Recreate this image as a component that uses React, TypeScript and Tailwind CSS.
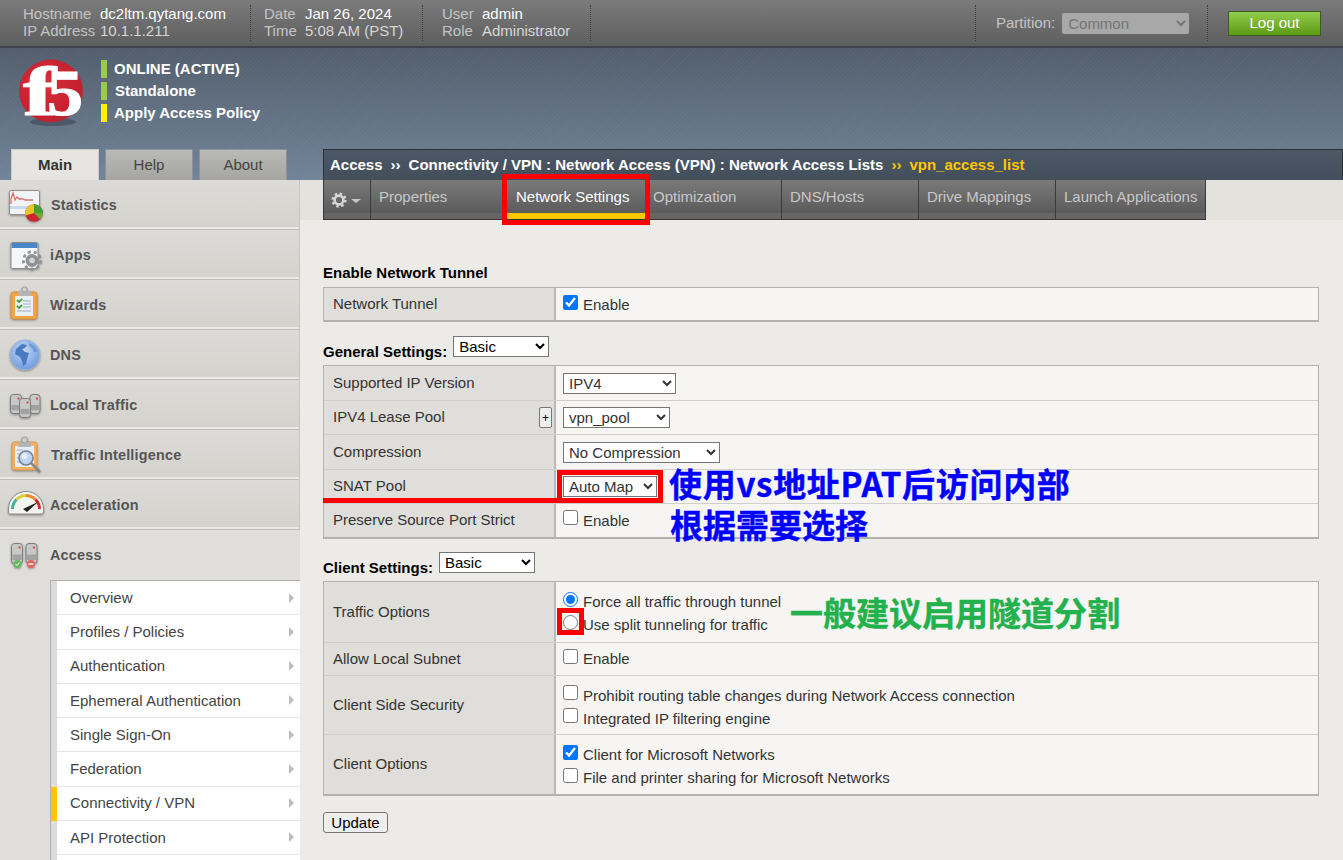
import type { ReactNode } from 'react';

const sans = "font-['Liberation_Sans',Arial,sans-serif]";
const iconCls = 'block shrink-0 drop-shadow-[0_1px_1px_rgba(0,0,0,0.35)]';

// sidebar icons share one 44x50 box, same size as the row they sit in
function StatsIcon() {
  return (
    <svg className={iconCls} width="44" height="50" viewBox="0 0 44 50">
      <rect x="9.5" y="10.5" width="30" height="24" rx="1.5" fill="#f3f4f6" stroke="#8f8f8f" />
      <rect x="10" y="26" width="29" height="3" fill="#c7daee" />
      <path d="M11 24V19l2-6 2 7 2-3 2 2h4l2 1h8" fill="none" stroke="#d8706c" strokeWidth="1.3" />
      <circle cx="34" cy="33" r="8.8" fill="#cc2630" />
      <path d="M34 33V24.2a8.8 8.8 0 0 1 8.8 8.8z" fill="#41a136" />
      <path d="M34 33l-8.4 2.5A8.8 8.8 0 0 1 34 24.2z" fill="#e8c42a" />
      <path d="M34 33h8.8a8.8 8.8 0 0 1-2.6 6.2z" fill="#6aae35" />
    </svg>
  );
}

function AppsIcon() {
  return (
    <svg className={iconCls} width="44" height="50" viewBox="0 0 44 50">
      <rect x="11" y="12.5" width="27" height="26" rx="1.5" fill="#f5f6f8" stroke="#8c8c8c" />
      <rect x="11.5" y="13" width="26" height="5" fill="#4a86c8" />
      <circle cx="32" cy="30.5" r="6.5" fill="#8d9297" />
      <circle cx="32" cy="30.5" r="8.6" fill="none" stroke="#8d9297" strokeWidth="2.8" strokeDasharray="3 3" />
      <circle cx="32" cy="30.5" r="2.8" fill="#d2d4d6" />
    </svg>
  );
}

function WizardIcon() {
  return (
    <svg className={iconCls} width="44" height="50" viewBox="0 0 44 50">
      <rect x="11" y="12" width="26" height="27" rx="2.5" fill="#f2a548" stroke="#d98c2e" />
      <rect x="15" y="16" width="18" height="20" fill="#e8eff7" />
      <rect x="18" y="11" width="13" height="5" rx="1.5" fill="#b5b5b5" />
      <circle cx="24.5" cy="9.5" r="2.6" fill="#cfcfcf" stroke="#9a9a9a" />
      <path d="M17 20l2 2 3-3M17 26l2 2 3-3" fill="none" stroke="#3fa535" strokeWidth="1.8" />
      <path d="M23 21h8M23 24h8M23 27h8M17 31h14" stroke="#a2aebd" strokeWidth="1.1" />
    </svg>
  );
}

function GlobeIcon() {
  return (
    <svg className={iconCls} width="44" height="50" viewBox="0 0 44 50">
      <defs>
        <radialGradient id="globe" cx="0.45" cy="0.35" r="0.75">
          <stop offset="0" stopColor="#c6daf6" />
          <stop offset="1" stopColor="#5f90dc" />
        </radialGradient>
      </defs>
      <circle cx="25" cy="25" r="15" fill="url(#globe)" stroke="#a0b6d8" />
      <path d="M16 19l6-5 5 1-2 3-3 1 3 3 4 1-2 6-1 5-3 2-1-5-2-4-5-3z" fill="#4a7ac2" />
      <path d="M29 13l6 3 3 6-4 0-2-4-3-2z" fill="#6f9bd8" />
    </svg>
  );
}

function Server({ x, y, w, h }: { x: number; y: number; w: number; h: number }) {
  return (
    <g>
      <rect x={x} y={y} width={w} height={h} rx="3" fill="#c8c8c8" stroke="#7a7a7a" />
      <rect x={x + 1} y={y + h * 0.55} width={w - 2} height={h * 0.28} fill="#a2a2a2" />
      <rect x={x + w - 4} y={y + 3} width="2" height="2" fill="#e0403a" />
    </g>
  );
}

function LocalIcon() {
  return (
    <svg className={iconCls} width="44" height="50" viewBox="0 0 44 50">
      <Server x={10.5} y={14.5} w={11} h={19} />
      <Server x={30} y={14.5} w={10} h={19} />
      <Server x={19.5} y={18.5} w={11} h={19} />
    </svg>
  );
}

function IntelIcon() {
  return (
    <svg className={iconCls} width="44" height="50" viewBox="0 0 44 50">
      <rect x="12" y="12" width="25" height="28" rx="2.5" fill="#f2b066" stroke="#dd9a48" />
      <rect x="15" y="16" width="19" height="21" fill="#e6edf6" />
      <rect x="18" y="12" width="13" height="5" rx="1.5" fill="#b5b5b5" />
      <circle cx="24.5" cy="10" r="3" fill="#cfcfcf" stroke="#9a9a9a" />
      <path d="M17 20h6M17 24h3M17 28h3M17 32h8" stroke="#a2aebd" strokeWidth="1.1" />
      <path d="M31 33l9 9" stroke="#8a8a8a" strokeWidth="2.6" />
      <circle cx="26" cy="28" r="7" fill="#bdd4ef" stroke="#6f8296" strokeWidth="1.6" />
      <circle cx="24.5" cy="26" r="3" fill="#e8f0fa" />
    </svg>
  );
}

function GaugeIcon() {
  return (
    <svg className={iconCls} width="44" height="50" viewBox="0 0 44 50">
      <path d="M8.500 29a17.500 17.500 0 0 1 35 0v3a2 2 0 0 1-2 2h-31a2 2 0 0 1-2-2z" fill="#f4f4f1" stroke="#8c8c8c" />
      <path d="M12.500 29a13.500 13.500 0 0 1 4-9.500" fill="none" stroke="#3fb59a" strokeWidth="3" />
      <path d="M16.500 19.500a13.500 13.500 0 0 1 9.500-4" fill="none" stroke="#d9cf3a" strokeWidth="3" />
      <path d="M26 15.500a13.500 13.500 0 0 1 9.500 4" fill="none" stroke="#ee8a2a" strokeWidth="3" />
      <path d="M35.500 19.500a13.500 13.500 0 0 1 4 9.500" fill="none" stroke="#d9262c" strokeWidth="3" />
      <path d="M23 29l15-7-11 10z" fill="#1f1f1f" />
    </svg>
  );
}

function AccessIcon() {
  return (
    <svg className={iconCls} width="44" height="50" viewBox="0 0 44 50">
      <Server x={11.5} y={13.5} w={11} h={20} />
      <Server x={26} y={13.5} w={11} h={20} />
      <circle cx="17.500" cy="34" r="4" fill="#62bb5c" />
      <path d="M15.500 34l1.500 1.500 2.500-3" fill="none" stroke="#fff" strokeWidth="1" />
      <circle cx="31" cy="34" r="4" fill="#e4645f" />
      <path d="M28.500 34h5" stroke="#fff" strokeWidth="1.400" />
    </svg>
  );
}

function GearIcon() {
  return (
    <svg width="16" height="16" viewBox="0 0 16 16">
      <circle cx="8" cy="8" r="4.400" fill="none" stroke="#d4d4d4" strokeWidth="2.600" />
      <circle cx="8" cy="8" r="6.400" fill="none" stroke="#d4d4d4" strokeWidth="2.400" strokeDasharray="2.500 2.500" />
    </svg>
  );
}

function F5Logo() {
  return (
    <svg className="block -mt-[14px]" width="70" height="88" viewBox="0 -14 70 88">
      <defs>
        <radialGradient id="f5red" cx="0.4" cy="0.4" r="0.7">
          <stop offset="0" stopColor="#d9303c" />
          <stop offset="0.75" stopColor="#c4202e" />
          <stop offset="1" stopColor="#a8323c" />
        </radialGradient>
      </defs>
      <ellipse cx="36" cy="63" rx="23" ry="4" fill="#39424e" opacity="0.55" />
      <ellipse cx="34" cy="32" rx="32" ry="31.500" fill="url(#f5red)" />
      <text x="6" y="56" textLength="33" lengthAdjust="spacingAndGlyphs" fontFamily="Liberation Serif, serif" fontWeight="700" fontSize="70" fill="#fff" stroke="#fff" strokeWidth="1.2">f</text>
      <text x="30" y="56" textLength="36" lengthAdjust="spacingAndGlyphs" fontFamily="Liberation Serif, serif" fontWeight="700" fontSize="66" fill="#fff" stroke="#fff" strokeWidth="1.2">5</text>
    </svg>
  );
}

const navItems = [
  { label: 'Statistics', icon: <StatsIcon />, text: 'ml-[7px]' },
  { label: 'iApps', icon: <AppsIcon />, text: 'ml-[6px]' },
  { label: 'Wizards', icon: <WizardIcon />, text: 'ml-[6px]' },
  { label: 'DNS', icon: <GlobeIcon />, text: 'ml-[6px]' },
  { label: 'Local Traffic', icon: <LocalIcon />, text: 'ml-[6px]' },
  { label: 'Traffic Intelligence', icon: <IntelIcon />, text: 'ml-[7px]' },
  { label: 'Acceleration', icon: <GaugeIcon />, text: 'ml-[6px]' },
];

const subItems = [
  'Overview',
  'Profiles / Policies',
  'Authentication',
  'Ephemeral Authentication',
  'Single Sign-On',
  'Federation',
  'Connectivity / VPN',
  'API Protection',
  '',
];

const tabs = [
  { label: 'Properties', w: 'w-[135px] pl-[8px]' },
  { label: 'Network Settings', w: 'w-[141px] pl-[10px]', active: true },
  { label: 'Optimization', w: 'w-[135px] pl-[6px]' },
  { label: 'DNS/Hosts', w: 'w-[137px] pl-[8px]' },
  { label: 'Drive Mappings', w: 'w-[137px] pl-[8px]' },
  { label: 'Launch Applications', w: 'w-[150px] pl-[8px]' },
];

function Info({ rows, labelW, className }: { rows: string[][]; labelW: string; className: string }) {
  return (
    <div className={`h-[36px] mt-[5px] pb-[2px] flex flex-col justify-center border-r border-dotted border-[#3d3d3d] ${className}`}>
      {rows.map((r, i) => (
        <div key={r[0]} className="flex leading-[17px]">
          <span className={`${labelW} text-[#c4c4c4]`}>{r[0]}</span>
          <span className={i === 0 ? 'text-white' : 'text-[#d6d6d6]'}>{r[1]}</span>
        </div>
      ))}
    </div>
  );
}

function Status({ color, text, pad }: { color: string; text: string; pad: string }) {
  return (
    <div className="flex items-center h-[18px]">
      <span className={`w-[6px] h-[18px] ${color}`} />
      <span className={`${pad} pt-[1px] font-bold text-white text-[15px]`}>{text}</span>
    </div>
  );
}

function Row({ label, h, top, extra, pad = '', children }: { label: string; h: string; top?: boolean; extra?: ReactNode; pad?: string; children: ReactNode }) {
  return (
    <div className={`flex ${h} ${top ? '' : 'border-t border-[#cfcfcb]'}`}>
      <div className="w-[232px] shrink-0 bg-[#dfdeda] border-r-2 border-[#b9b9b9] pl-[9px] pr-[2px] flex items-center justify-between">
        <span>{label}</span>
        {extra}
      </div>
      <div className={`flex-1 bg-[#f6f5f3] pl-[7px] flex flex-col justify-center ${pad}`}>{children}</div>
    </div>
  );
}

function Check({ label, checked }: { label: string; checked?: boolean }) {
  return (
    <label className="flex items-center h-[23px]">
      <input type="checkbox" defaultChecked={checked} className="w-[15px] h-[15px] accent-[#0075ff] -mt-[6px]" />
      <span className="ml-[5px] pt-[1px]">{label}</span>
    </label>
  );
}

function Radio({ label, checked }: { label: string; checked?: boolean }) {
  return (
    <label className="flex items-center h-[23px]">
      <input type="radio" name="traffic" defaultChecked={checked} className="w-[15px] h-[15px] accent-[#0075ff] -mt-[6px]" />
      <span className="ml-[5px] pt-[1px]">{label}</span>
    </label>
  );
}

function Select({ value, w }: { value: string; w: string }) {
  return (
    <select defaultValue={value} className={`${w} h-[21px] bg-white border border-[#767676] text-[15px] pl-[1px]`}>
      <option>{value}</option>
    </select>
  );
}

function Table({ children }: { children: ReactNode }) {
  return <div className="border-[1px] border-b-2 border-[#b2b2b0]">{children}</div>;
}

export default function App() {
  return (
    <div className={`${sans} relative w-[1343px] h-[860px] overflow-hidden bg-[#ecebe8] text-[15px] text-[#333]`}>
      {/* top bar */}
      <div className="h-[48px] flex bg-gradient-to-b from-[#7b7b7b] to-[#5e5e5e] border-b-2 border-[#3f4246]">
        <Info
          className="w-[251px] pl-[23px]"
          labelW="w-[77px]"
          rows={[['Hostname', 'dc2ltm.qytang.com'], ['IP Address', '10.1.1.211']]}
        />
        <Info
          className="w-[172px] pl-[13px]"
          labelW="w-[41px]"
          rows={[['Date', 'Jan 26, 2024'], ['Time', '5:08 AM (PST)']]}
        />
        <Info
          className="w-[168px] pl-[19px]"
          labelW="w-[40px]"
          rows={[['User', 'admin'], ['Role', 'Administrator']]}
        />
        <div className="ml-auto flex">
          <div className="w-[233px] h-[36px] mt-[5px] flex items-center pl-[20px] gap-[7px] border-x border-dotted border-[#3d3d3d] text-[#c4c4c4]">
            <span>Partition:</span>
            <select disabled defaultValue="Common" className="w-[127px] h-[21px] bg-[#a8a8a8] text-[#757575] pl-[2px] opacity-100 rounded-[2px]">
              <option>Common</option>
            </select>
          </div>
          <div className="w-[135px] pl-[20px] pt-[11px]">
            <div className="w-[93px] h-[25px] pb-[1px] flex items-center justify-center text-white bg-gradient-to-b from-[#93cd4c] to-[#5c9a0e] border border-[#3f5a22]">
              Log out
            </div>
          </div>
        </div>
      </div>

      {/* banner */}
      <div className="h-[132px] flex flex-col bg-[repeating-linear-gradient(135deg,rgba(255,255,255,0.025)_0,rgba(255,255,255,0.025)_1px,transparent_1px,transparent_3px),linear-gradient(to_bottom,#525e6d,#728499)]">
        <div className="h-[101px] flex pl-[17px] pt-[11px]">
          <F5Logo />
          <div className="ml-[14px] flex flex-col gap-[4px] pt-[1px]">
            <Status color="bg-[#9acb4c]" text="ONLINE (ACTIVE)" pad="ml-[7px]" />
            <Status color="bg-[#9acb4c]" text="Standalone" pad="ml-[8px]" />
            <Status color="bg-[#fff200]" text="Apply Access Policy" pad="ml-[7px]" />
          </div>
        </div>
        <div className="h-[31px] flex items-end pl-[11px]">
          <div className="w-[88px] h-[31px] pt-[1px] flex items-center justify-center font-bold bg-[#e6e5e1] border border-b-0 border-[#c9c9c5] text-[#333]">Main</div>
          <div className="w-[88px] h-[31px] pt-[1px] ml-[6px] flex items-center justify-center bg-gradient-to-b from-[#b9b9b5] to-[#a5a5a1] border border-b-0 border-[#8c9298] text-[#444]">Help</div>
          <div className="w-[88px] h-[31px] pt-[1px] ml-[6px] flex items-center justify-center bg-gradient-to-b from-[#b9b9b5] to-[#a5a5a1] border border-b-0 border-[#8c9298] text-[#444]">About</div>
          <div className="ml-[36px] flex-1 h-[31px] pt-[1px] flex items-center pl-[6px] font-bold text-white bg-gradient-to-b from-[#4c5866] to-[#434e5b] border border-b-0 border-[#2e3236]">
            <span>Access</span>
            <span className="mx-[8px]">››</span>
            <span>Connectivity / VPN : Network Access (VPN) : Network Access Lists</span>
            <span className="mx-[8px] text-[#ffc600]">››</span>
            <span className="text-[#ffc600]">vpn_access_list</span>
          </div>
        </div>
      </div>

      <div className="flex">
        {/* sidebar */}
        <div className="w-[300px] h-[680px] shrink-0 bg-[#dfdeda]">
          {navItems.map((n) => (
            <div key={n.label} className="h-[50px] flex items-center bg-gradient-to-b from-[#dcdbd7] to-[#d3d2cd] border-b border-[#bdbdba] border-r border-r-[#c6c6c3] shadow-[inset_0_-2px_0_#e9e8e5]">
              {n.icon}
              <span className={`${n.text} pt-[2px] font-bold text-[#555] text-[14.4px] tracking-[0.2px]`}>{n.label}</span>
            </div>
          ))}
          <div className="h-[50px] flex items-center">
            <AccessIcon />
            <span className="ml-[6px] pt-[2px] text-[14.4px] font-bold text-[#555] tracking-[0.2px]">Access</span>
          </div>
          <div className="ml-[50px] border-l border-t border-[#b0b0ae]">
            {subItems.map((s) => (
              <div key={s || 'more'} className="flex h-[34.25px]">
                <span className={`w-[6px] shrink-0 ${s.startsWith('Connectivity') ? 'bg-[#ffc600]' : 'bg-[#dcdcdc]'}`} />
                <div className="flex-1 bg-white border-b border-[#e6e6e6] pl-[13px] pr-[6px] flex items-center justify-between text-[#444]">
                  <span className="pt-[1px]">{s}</span>
                  {s && <span className="w-0 h-0 border-y-[5px] border-y-transparent border-l-[5px] border-l-[#bdbdbd]" />}
                </div>
              </div>
            ))}
          </div>
        </div>

        {/* main */}
        <div className="flex-1 min-w-0">
          <div className="h-[40px] pl-[23px] bg-[#e3e2dd]">
            <div className="flex w-[883px] h-[40px] bg-[linear-gradient(to_bottom,#7a7a7a_0%,#5b5b5b_84%,#666_84%,#666_100%)] border-b border-[#333] border-x border-x-[#3a3a3a]">
              <div className="w-[47px] pr-[2px] flex items-center justify-center gap-[4px] border-r border-[#3a3a3a] shrink-0">
                <GearIcon />
                <span className="w-0 h-0 border-x-[5px] border-x-transparent border-t-[4px] border-t-[#c9c9c9] mt-[3px]" />
              </div>
              {tabs.map((t) => (
                <div
                  key={t.label}
                  className={`${t.w} shrink-0 pt-[6px] border-r border-[#3a3a3a] ${t.active ? 'text-white border-b-[6px] border-b-[#ffc600]' : 'text-[#c8c8c8]'}`}
                >
                  {t.label}
                </div>
              ))}
            </div>
          </div>

          <div className="pl-[23px] pr-[24px]">
            <div className="mt-[44px] h-[18px] flex items-center font-bold text-black">Enable Network Tunnel</div>
            <div className="mt-[5px]">
              <Table>
                <Row label="Network Tunnel" h="h-[32px]" top pad="pt-[2px]">
                  <Check label="Enable" checked />
                </Row>
              </Table>
            </div>

            <div className="mt-[15px] h-[28px] flex items-start font-bold text-black">
              <span className="mt-[4px]">General Settings:</span>
              <Select value="Basic" w="w-[96px] ml-[6px] -mt-[1px] font-normal" />
            </div>
            <Table>
              <Row label="Supported IP Version" h="h-[34px]" top>
                <Select value="IPV4" w="w-[113px]" />
              </Row>
              <Row
                label="IPV4 Lease Pool"
                h="h-[34px]"
                extra={
                  <span className="w-[13px] h-[21px] flex items-center justify-center bg-[#efefef] border border-[#767676] rounded-[2px] text-[12px] leading-none text-black">+</span>
                }
              >
                <Select value="vpn_pool" w="w-[107px]" />
              </Row>
              <Row label="Compression" h="h-[35px]">
                <Select value="No Compression" w="w-[157px]" />
              </Row>
              <Row label="SNAT Pool" h="h-[34px]">
                <Select value="Auto Map" w="w-[94px]" />
              </Row>
              <Row label="Preserve Source Port Strict" h="h-[34px]">
                <Check label="Enable" />
              </Row>
            </Table>

            <div className="mt-[14px] h-[28px] flex items-start font-bold text-black">
              <span className="mt-[4px]">Client Settings:</span>
              <Select value="Basic" w="w-[96px] ml-[6px] -mt-[1px] font-normal" />
            </div>
            <Table>
              <Row label="Traffic Options" h="h-[60px]" top pad="pt-[3px]">
                <Radio label="Force all traffic through tunnel" checked />
                <Radio label="Use split tunneling for traffic" />
              </Row>
              <Row label="Allow Local Subnet" h="h-[33px]">
                <Check label="Enable" />
              </Row>
              <Row label="Client Side Security" h="h-[59px]" pad="pt-[4px]">
                <Check label="Prohibit routing table changes during Network Access connection" />
                <Check label="Integrated IP filtering engine" />
              </Row>
              <Row label="Client Options" h="h-[60px]" pad="pt-[4px]">
                <Check label="Client for Microsoft Networks" checked />
                <Check label="File and printer sharing for Microsoft Networks" />
              </Row>
            </Table>
            <button className="mt-[16px] w-[65px] h-[21px] pt-[1px] flex items-center justify-center bg-[#efefef] border border-[#767676] rounded-[3px] text-black">Update</button>
          </div>
        </div>
      </div>

      {/* annotations drawn over the page */}
      <div className="absolute left-[502px] top-[174px] w-[148px] h-[51px] border-[5px] border-[#ff0000]" />
      <div className="absolute left-[557px] top-[470px] w-[106px] h-[33px] border-[5px] border-[#ff0000]" />
      <div className="absolute left-[323px] top-[498px] w-[234px] h-[5px] bg-[#ff0000]" />
      <div className="absolute left-[557px] top-[608px] w-[27px] h-[27px] border-[5px] border-[#ff0000]" />
      <div className="absolute left-[669px] top-[463px] font-['Noto_Sans_CJK_SC',sans-serif] font-bold text-[33px] tracking-[0.7px] leading-[40px] text-[#0000ff] [-webkit-text-stroke:0.4px_#0000ff] whitespace-nowrap">使用vs地址PAT后访问内部</div>
      <div className="absolute left-[670px] top-[504px] font-['Noto_Sans_CJK_SC',sans-serif] font-bold text-[33px] leading-[40px] text-[#0000ff] [-webkit-text-stroke:0.4px_#0000ff] whitespace-nowrap">根据需要选择</div>
      <div className="absolute left-[790px] top-[592px] font-['Noto_Sans_CJK_SC',sans-serif] font-bold text-[33px] leading-[40px] text-[#22b14c] [-webkit-text-stroke:0.4px_#22b14c] whitespace-nowrap">一般建议启用隧道分割</div>
    </div>
  );
}
